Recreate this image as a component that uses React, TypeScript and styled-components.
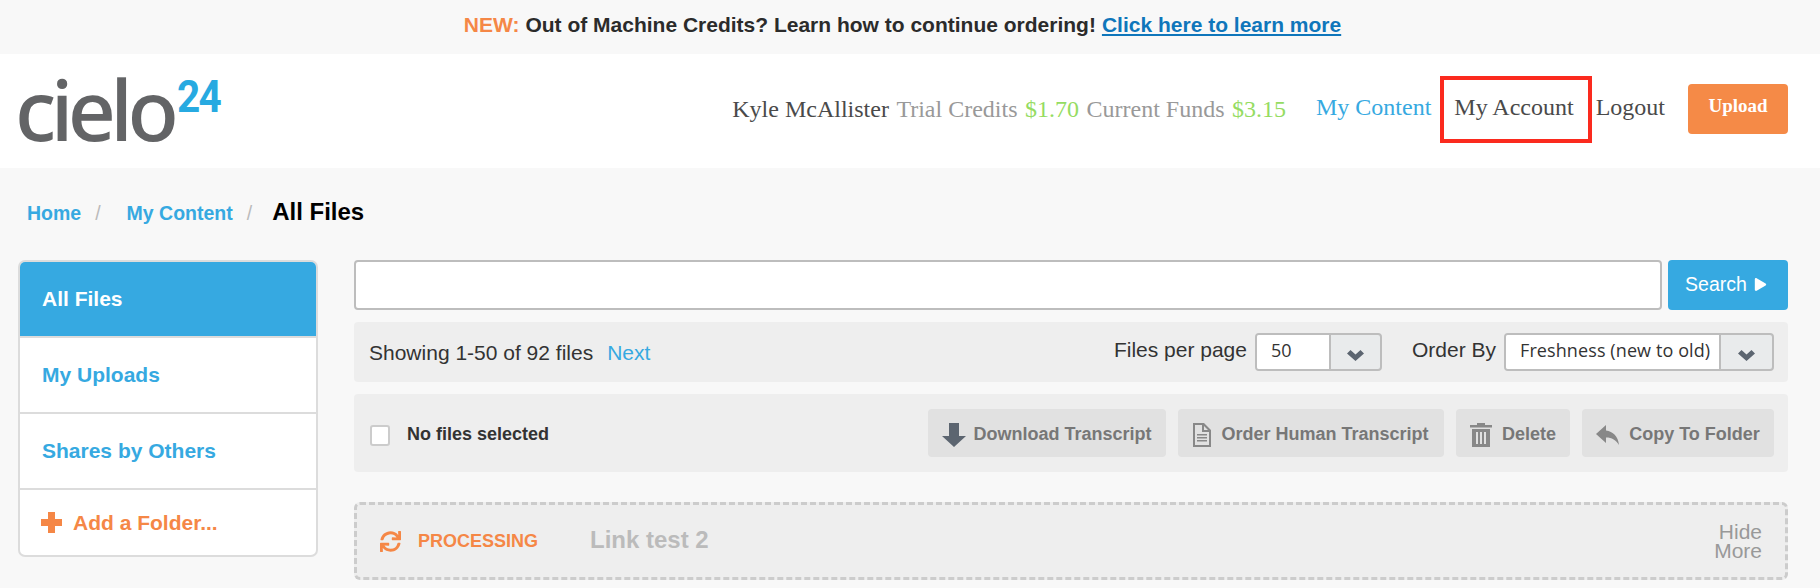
import { FC } from "react";
import styled, { createGlobalStyle } from "styled-components";
import { FaSync, FaPlay } from "react-icons/fa";

const Blue = "#36a9e1";
const Orange = "#f58746";

const GlobalStyle = createGlobalStyle`
  html, body {
    margin: 0;
    height: 588px;
    overflow: hidden;
    background: #f8f8f8;
    font-family: "Liberation Sans", Arial, sans-serif;
  }
`;

const Notice = styled.div`
  height: 54px;
  display: flex;
  align-items: center;
  justify-content: center;
  font-size: 21px;
  font-weight: bold;
  color: #2b2b2b;
  gap: 6px;
  padding: 0 15px 4px 0;
  box-sizing: border-box;
`;
const NoticeNew = styled.span`
  color: ${Orange};
`;
const NoticeLink = styled.a`
  color: #0f76bb;
  text-decoration: underline;
`;

const Header = styled.header`
  height: 114px;
  background: #fff;
  display: flex;
  align-items: center;
  justify-content: space-between;
  padding: 0 32px 0 15px;
  font-family: "Liberation Serif", "Times New Roman", serif;
`;
const Logo = styled.div`
  display: flex;
  align-items: flex-start;
  height: 90px;
  margin-top: -4px;
  font-family: "Noto Sans", sans-serif;
  color: #636466;
`;
const LogoWord = styled.span`
  font-size: 84px;
  font-weight: 500;
  line-height: 90px;
  letter-spacing: -5.6px;
`;
const LogoSup = styled.span`
  font-family: Roboto, sans-serif;
  font-size: 45px;
  line-height: 46px;
  font-weight: bold;
  letter-spacing: -2px;
  color: #27aae1;
  margin: 10px 0 0 4px;
  transform: scaleX(0.9);
  transform-origin: left;
`;
const HeaderRight = styled.div`
  display: flex;
  align-items: center;
  margin-top: -4px;
`;
const Stats = styled.div`
  display: flex;
  gap: 7.5px;
  font-size: 24px;
  margin-right: 30px;
`;
const Stat = styled.span<{ $tone: "name" | "label" | "money" }>`
  color: ${(p) =>
    p.$tone === "name" ? "#4a4a4a" : p.$tone === "label" ? "#999" : "#95dc62"};
`;
const NavLink = styled.a<{ $active?: boolean }>`
  display: flex;
  align-items: center;
  height: 67px;
  box-sizing: border-box;
  font-size: 24px;
  color: ${(p) => (p.$active ? Blue : "#4a4a4a")};
  padding-bottom: 4px;
`;
const BoxedLink = styled(NavLink)`
  padding: 0 14px 4px 10px;
  border: 4px solid #fb2a1e;
  margin: 0 4px 0 9px;
`;
const UploadButton = styled.button`
  width: 100px;
  height: 50px;
  margin-left: 23px;
  border: none;
  border-radius: 4px;
  background: #f58a47;
  color: #fff;
  font-family: inherit;
  font-size: 19px;
  font-weight: bold;
  padding-bottom: 8px;
`;

const Breadcrumbs = styled.nav`
  height: 92px;
  box-sizing: border-box;
  padding: 30px 0 0 27px;
  display: flex;
  align-items: baseline;
  font-size: 19.5px;
  font-weight: bold;
`;
const Crumb = styled.a`
  color: ${Blue};
`;
const Slash = styled.span`
  color: #bbb;
  font-weight: normal;
  margin: 0 26px 0 14px;
`;
const Current = styled.span`
  font-size: 24px;
  color: #000;
  margin-left: -6px;
`;

const Body = styled.div`
  display: flex;
  align-items: flex-start;
  gap: 36px;
  padding: 0 32px 0 18px;
`;

const Sidebar = styled.aside`
  width: 300px;
  flex: none;
  box-sizing: border-box;
  border: 2px solid #dcdcdc;
  border-radius: 7px;
  background: #fff;
  overflow: hidden;
`;
const SideItem = styled.a<{ $active?: boolean }>`
  display: flex;
  align-items: center;
  height: 76px;
  box-sizing: border-box;
  padding: 0 0 0 22px;
  font-size: 21px;
  font-weight: bold;
  color: ${(p) => (p.$active ? "#fff" : Blue)};
  background: ${(p) => (p.$active ? Blue : "#fff")};
  border-bottom: 2px solid #dcdcdc;
`;
const AddFolder = styled.a`
  display: flex;
  align-items: center;
  gap: 11px;
  height: 65px;
  padding: 0 0 0 21px;
  box-sizing: border-box;
  font-size: 21px;
  font-weight: bold;
  color: ${Orange};
`;

const Main = styled.main`
  flex: 1;
  min-width: 0;
  display: flex;
  flex-direction: column;
`;
const SearchRow = styled.div`
  display: flex;
  gap: 6px;
  height: 50px;
`;
const SearchInput = styled.input`
  flex: 1;
  box-sizing: border-box;
  border: 2px solid #bdbdbd;
  border-radius: 4px;
  background: #fff;
`;
const SearchButton = styled.button`
  width: 120px;
  border: none;
  border-radius: 4px;
  background: ${Blue};
  color: #fff;
  font-family: inherit;
  font-size: 19.5px;
  display: flex;
  align-items: center;
  justify-content: center;
  gap: 7px;
  padding: 0 4px 2px 0;
`;
const Bar = styled.div`
  background: #eee;
  border-radius: 4px;
  display: flex;
  align-items: center;
  justify-content: space-between;
`;
const PageBar = styled(Bar)`
  height: 60px;
  margin-top: 12px;
  padding: 0 14px 0 15px;
  font-size: 21px;
  color: #333;
`;
const PageCount = styled.span`
  padding-top: 2px;
`;
const Next = styled.a`
  color: ${Blue};
  margin-left: 14px;
`;
const Controls = styled.div`
  display: flex;
  align-items: center;
`;
const ControlLabel = styled.span`
  margin-right: 8px;
  padding-bottom: 5px;
`;
const Select = styled.div<{ $w: number; $arrow: number; $gap?: number }>`
  width: ${(p) => p.$w}px;
  height: 38px;
  box-sizing: border-box;
  display: grid;
  grid-template-columns: 1fr ${(p) => p.$arrow}px;
  border: 2px solid #bdbdbd;
  border-radius: 4px;
  background: #e9ebec;
  font-family: "Open Sans", sans-serif;
  font-size: 18px;
  letter-spacing: 0.1px;
  margin-right: ${(p) => p.$gap ?? 0}px;
  overflow: hidden;
`;
const SelectValue = styled.span`
  background: #fff;
  border-right: 2px solid #bdbdbd;
  padding: 0 0 4px 14px;
  display: flex;
  align-items: center;
  white-space: nowrap;
  color: #333;
`;
const SelectArrow = styled.span`
  display: flex;
  align-items: center;
  justify-content: center;
  padding-top: 7px;
`;
const ActionBar = styled(Bar)`
  height: 78px;
  margin-top: 12px;
  padding: 0 14px 0 16px;
`;
const SelectAll = styled.label`
  display: flex;
  align-items: center;
  gap: 17px;
  font-size: 18px;
  font-weight: bold;
  color: #333;
  padding-top: 2px;
`;
const Check = styled.span`
  width: 20px;
  height: 21px;
  box-sizing: border-box;
  border: 2px solid #ccc;
  border-radius: 3px;
  background: #fff;
  margin-top: 2px;
`;
const Actions = styled.div`
  display: flex;
  gap: 12px;
`;
const ActionButton = styled.button<{ $w: number; $gap?: number }>`
  width: ${(p) => p.$w}px;
  height: 48px;
  border: none;
  border-radius: 4px;
  background: #e1e1e1;
  color: #777;
  font-family: inherit;
  font-size: 18px;
  font-weight: bold;
  display: flex;
  align-items: center;
  justify-content: center;
  gap: ${(p) => p.$gap ?? 10}px;
  padding: 3px 0 0;
`;
const Processing = styled.div`
  height: 78px;
  margin-top: 30px;
  box-sizing: border-box;
  border: 3px dashed #ccc;
  border-radius: 6px;
  background: #eee;
  display: flex;
  align-items: center;
  padding: 0 23px 0 23px;
`;
const Status = styled.span`
  display: flex;
  align-items: center;
  gap: 17px;
  width: 210px;
  font-size: 18px;
  font-weight: bold;
  color: ${Orange};
`;
const FileName = styled.span`
  flex: 1;
  font-size: 24px;
  font-weight: bold;
  color: #bbb;
  padding-bottom: 2px;
`;
const Toggle = styled.span`
  font-size: 21px;
  line-height: 19px;
  text-align: right;
  color: #999;
`;

const PlusIcon: FC = () => (
  <svg width="21" height="21" viewBox="0 0 21 21" fill={Orange}>
    <path d="M7 0h7v7h7v7h-7v7H7v-7H0V7h7z" />
  </svg>
);
const DownloadIcon: FC = () => (
  <svg width="24" height="24" viewBox="0 0 24 24" fill="#5c6570">
    <path d="M7 0h10v13h7L12 24 0 13h7z" />
  </svg>
);
const FileIcon: FC = () => (
  <svg width="18" height="24" viewBox="0 0 18 24" fill="#888">
    <path
      fillRule="evenodd"
      d="M0 0h11l7 7v17H0zM2 2v20h14V9H9V2zM11 3v4h4z"
    />
    <path d="M4 11h10v1.5H4zM4 14h10v1.5H4zM4 17h10v1.5H4z" />
  </svg>
);
const TrashIcon: FC = () => (
  <svg width="22" height="24" viewBox="0 0 22 24" fill="#888">
    <path
      fillRule="evenodd"
      d="M7 0h8v2h7v2.5H0V2h7zM2 6h18v18H2zM6 9v12h2V9zM10 9v12h2V9zM14 9v12h2V9z"
    />
  </svg>
);
const ReplyIcon: FC = () => (
  <svg width="23" height="20" viewBox="0 0 23 20" fill="#888">
    <path d="M0 9 10 0v5.5C17 6.5 22 11 23 20 20 15 16 12.5 10 12.5V18z" />
  </svg>
);
const ChevronIcon: FC = () => (
  <svg width="17" height="11" viewBox="0 0 17 11" fill="#5c6570">
    <path d="M0 3.5 3.5 0l5 4.5 5-4.5L17 3.5 8.5 11z" />
  </svg>
);

const App: FC = () => {
  return (
    <>
      <GlobalStyle />
      <Notice>
        <NoticeNew>NEW:</NoticeNew>
        <span>Out of Machine Credits? Learn how to continue ordering!</span>
        <NoticeLink>Click here to learn more</NoticeLink>
      </Notice>
      <Header>
        <Logo>
          <LogoWord>cielo</LogoWord>
          <LogoSup>24</LogoSup>
        </Logo>
        <HeaderRight>
          <Stats>
            <Stat $tone="name">Kyle McAllister</Stat>
            <Stat $tone="label">Trial Credits</Stat>
            <Stat $tone="money">$1.70</Stat>
            <Stat $tone="label">Current Funds</Stat>
            <Stat $tone="money">$3.15</Stat>
          </Stats>
          <NavLink $active>My Content</NavLink>
          <BoxedLink>My Account</BoxedLink>
          <NavLink>Logout</NavLink>
          <UploadButton>Upload</UploadButton>
        </HeaderRight>
      </Header>
      <Breadcrumbs>
        <Crumb>Home</Crumb>
        <Slash>/</Slash>
        <Crumb>My Content</Crumb>
        <Slash>/</Slash>
        <Current>All Files</Current>
      </Breadcrumbs>
      <Body>
        <Sidebar>
          <SideItem $active>All Files</SideItem>
          <SideItem>My Uploads</SideItem>
          <SideItem>Shares by Others</SideItem>
          <AddFolder>
            <PlusIcon />
            Add a Folder...
          </AddFolder>
        </Sidebar>
        <Main>
          <SearchRow>
            <SearchInput />
            <SearchButton>
              Search <FaPlay size={13} />
            </SearchButton>
          </SearchRow>
          <PageBar>
            <PageCount>
              Showing 1-50 of 92 files<Next>Next</Next>
            </PageCount>
            <Controls>
              <ControlLabel>Files per page</ControlLabel>
              <Select $w={127} $arrow={49} $gap={30}>
                <SelectValue>50</SelectValue>
                <SelectArrow>
                  <ChevronIcon />
                </SelectArrow>
              </Select>
              <ControlLabel>Order By</ControlLabel>
              <Select $w={270} $arrow={51}>
                <SelectValue>Freshness (new to old)</SelectValue>
                <SelectArrow>
                  <ChevronIcon />
                </SelectArrow>
              </Select>
            </Controls>
          </PageBar>
          <ActionBar>
            <SelectAll>
              <Check />
              No files selected
            </SelectAll>
            <Actions>
              <ActionButton $w={238} $gap={7}>
                <DownloadIcon />
                Download Transcript
              </ActionButton>
              <ActionButton $w={266}>
                <FileIcon />
                Order Human Transcript
              </ActionButton>
              <ActionButton $w={114}>
                <TrashIcon />
                Delete
              </ActionButton>
              <ActionButton $w={192}>
                <ReplyIcon />
                Copy To Folder
              </ActionButton>
            </Actions>
          </ActionBar>
          <Processing>
            <Status>
              <FaSync size={21} />
              PROCESSING
            </Status>
            <FileName>Link test 2</FileName>
            <Toggle>
              Hide
              <br />
              More
            </Toggle>
          </Processing>
        </Main>
      </Body>
    </>
  );
};

export default App;
